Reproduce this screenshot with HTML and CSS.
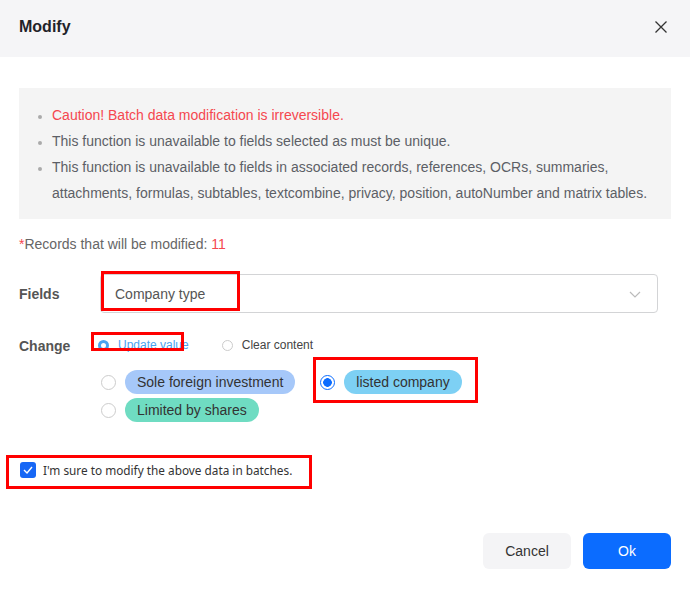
FILE: index.html
```html
<!DOCTYPE html>
<html lang="en">
<head>
    <meta charset="UTF-8">
    <meta name="viewport" content="width=device-width, initial-scale=1.0">
    <title>Modify</title>
    <link rel="stylesheet" href="styles.css">
</head>
<body>
    <div class="dialog">
        <div class="dialog-header">
            <h2 class="dialog-title">Modify</h2>
            <button class="close-btn" aria-label="Close">
                <svg width="14" height="14" viewBox="0 0 14 14"><path d="M1.5 1.5 L12.5 12.5 M12.5 1.5 L1.5 12.5" stroke="#333" stroke-width="1.3" fill="none"/></svg>
            </button>
        </div>

        <div class="dialog-body">
            <div class="notice">
                <ul>
                    <li class="danger">Caution! Batch data modification is irreversible.</li>
                    <li>This function is unavailable to fields selected as must be unique.</li>
                    <li>This function is unavailable to fields in associated records, references, OCRs, summaries, attachments, formulas, subtables, textcombine, privacy, position, autoNumber and matrix tables.</li>
                </ul>
            </div>

            <div class="records"><span class="star">*</span>Records that will be modified: <span class="count">11</span></div>

            <div class="form-row">
                <div class="form-label">Fields</div>
                <div class="select">
                    <span class="select-value">Company type</span>
                    <svg class="chevron" width="12" height="7" viewBox="0 0 12 7"><polyline points="1,1 6,6 11,1" stroke="#bbb" stroke-width="1.2" fill="none"/></svg>
                    <span class="mark mark-select"></span>
                </div>
            </div>

            <div class="form-row change-row">
                <div class="form-label">Change</div>
                <div class="modes">
                    <label class="mode active">
                        <span class="dot-radio"></span>Update value
                        <span class="mark mark-mode"></span>
                    </label>
                    <label class="mode">
                        <span class="dot-radio"></span>Clear content
                    </label>
                </div>
            </div>

            <div class="options">
                <label class="option">
                    <span class="radio"></span>
                    <span class="pill pill-blue">Sole foreign investment</span>
                </label>
                <label class="option checked">
                    <span class="radio"></span>
                    <span class="pill pill-sky">listed company</span>
                    <span class="mark mark-option"></span>
                </label>
                <label class="option">
                    <span class="radio"></span>
                    <span class="pill pill-green">Limited by shares</span>
                </label>
            </div>

            <label class="confirm">
                <span class="checkbox">
                    <svg width="10" height="8" viewBox="0 0 10 8"><polyline points="1,4 4,7 9,1" stroke="#fff" stroke-width="1.4" fill="none"/></svg>
                </span>
                I'm sure to modify the above data in batches.
                <span class="mark mark-confirm"></span>
            </label>
        </div>

        <div class="dialog-footer">
            <button class="btn btn-cancel">Cancel</button>
            <button class="btn btn-ok">Ok</button>
        </div>
    </div>
</body>
</html>
```

FILE: styles.css
```css
:root {
    --primary: #0b6cff;
    --danger: #f5474f;
    --text: #1f2329;
    --text-muted: #5c5f66;
    --border: #d3d4d6;
    --mark: #ff0000;
}

* {
    box-sizing: border-box;
    margin: 0;
    padding: 0;
}

body {
    font-family: 'Liberation Sans', Arial, sans-serif;
    font-size: 14px;
    color: var(--text);
    background: #fff;
}

.dialog {
    width: 690px;
    height: 590px;
    background: #fff;
}

.dialog-header {
    height: 57px;
    background: #f5f5f7;
    padding: 0 19px 3px;
    display: flex;
    align-items: center;
    justify-content: space-between;
}

.dialog-title {
    font-size: 16px;
    font-weight: bold;
    color: var(--text);
}

.close-btn {
    border: none;
    background: transparent;
    width: 14px;
    height: 14px;
    display: flex;
    margin-right: 3px;
    cursor: pointer;
}

.dialog-body {
    padding: 31px 19px 0;
}

.notice {
    background: #f4f4f4;
    padding: 14px 20px 13px 33px;
}

.notice ul {
    list-style: disc;
    color: var(--text-muted);
    line-height: 26px;
}

.notice li::marker {
    color: #aaa;
    font-size: 12px;
}

.notice .danger {
    color: var(--danger);
}

.records {
    margin-top: 15px;
    line-height: 20px;
    color: #666;
}

.records .star,
.records .count {
    color: var(--danger);
}

.form-row {
    display: flex;
    align-items: center;
    margin-top: 20px;
}

.form-label {
    width: 81px;
    font-weight: bold;
    color: #555;
}

.select {
    position: relative;
    width: 558px;
    height: 39px;
    border: 1px solid var(--border);
    border-radius: 4px;
    display: flex;
    align-items: center;
    justify-content: space-between;
    padding: 0 16px 0 14px;
    color: #555;
}

.chevron {
    margin-top: 1px;
}

.change-row {
    margin-top: 24px;
}

.modes {
    display: flex;
    gap: 33px;
    margin-left: -2px;
    margin-top: -2px;
}

.mode {
    position: relative;
    display: flex;
    align-items: center;
    height: 20px;
    font-size: 12px;
    color: #444;
}

.dot-radio {
    width: 11px;
    height: 11px;
    border-radius: 50%;
    border: 1px solid #ccc;
    margin-right: 9px;
}

.mode.active {
    color: #4aa3f0;
}

.mode.active .dot-radio {
    border: 3px solid #4aa3f0;
}

.options {
    display: flex;
    flex-wrap: wrap;
    width: 480px;
    column-gap: 25px;
    row-gap: 4px;
    margin: 15px 0 0 82px;
}

.option {
    position: relative;
    display: flex;
    align-items: center;
    gap: 9px;
    height: 24px;
}

.radio {
    width: 15px;
    height: 15px;
    border-radius: 50%;
    border: 1px solid #ccc;
    background: #fff;
}

.option.checked .radio {
    border: 1.5px solid var(--primary);
    background: radial-gradient(circle, var(--primary) 0 4px, #fff 4.6px);
}

.pill {
    height: 24px;
    line-height: 24px;
    padding: 0 12px;
    border-radius: 12px;
    color: #333;
}

.pill-blue {
    background: #a6c8f9;
}

.pill-sky {
    background: #7dd0f4;
}

.pill-green {
    background: #6fdcc2;
}

.confirm {
    position: relative;
    display: flex;
    align-items: center;
    gap: 7px;
    height: 20px;
    margin: 38px 0 0 1px;
    font-family: 'Noto Sans', sans-serif;
    font-size: 11.8px;
    color: #333;
}

.checkbox {
    width: 16px;
    height: 16px;
    border-radius: 3px;
    background: #1767f5;
    display: flex;
    align-items: center;
    justify-content: center;
}

.dialog-footer {
    display: flex;
    justify-content: flex-end;
    gap: 12px;
    padding: 0 19px;
    margin-top: 53px;
}

.btn {
    width: 88px;
    height: 36px;
    border: none;
    border-radius: 6px;
    font-family: 'Liberation Sans', Arial, sans-serif;
    font-size: 14px;
    cursor: pointer;
}

.btn-cancel {
    background: #f4f4f6;
    color: #333;
}

.btn-ok {
    background: var(--primary);
    color: #fff;
}

/* red annotation frames drawn over the screenshot */
.mark {
    position: absolute;
    border: 3px solid var(--mark);
    pointer-events: none;
}

.mark-select {
    left: 0;
    top: -4px;
    width: 139px;
    height: 40px;
}

.mark-mode {
    left: -7px;
    top: -3px;
    width: 93px;
    height: 19px;
}

.mark-option {
    left: -7px;
    top: -13px;
    width: 165px;
    height: 46px;
}

.mark-confirm {
    left: -14px;
    top: -5px;
    width: 306px;
    height: 34px;
}
```
